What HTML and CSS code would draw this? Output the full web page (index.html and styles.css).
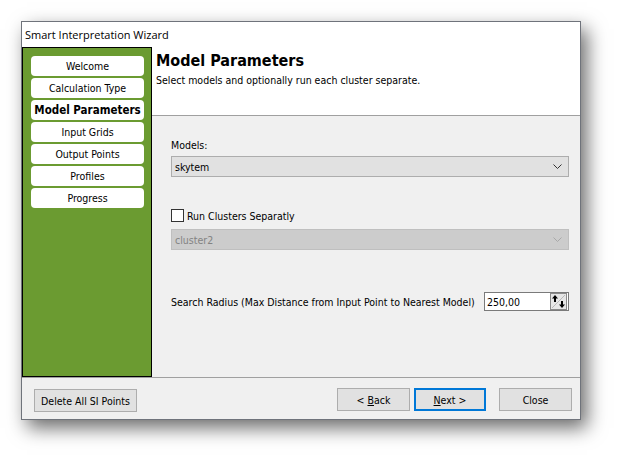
FILE: index.html
```html
<!DOCTYPE html>
<html>
<head>
<meta charset="utf-8">
<link rel="stylesheet" href="styles.css">
</head>
<body>
<div class="stage">
  <div class="window">
    <div class="titlebar">Smart Interpretation Wizard</div>
    <div class="main">
      <div class="sidebar">
        <div class="step">Welcome</div>
        <div class="step">Calculation Type</div>
        <div class="step active">Model Parameters</div>
        <div class="step">Input Grids</div>
        <div class="step">Output Points</div>
        <div class="step">Profiles</div>
        <div class="step">Progress</div>
      </div>
      <div class="pane">
        <div class="header">
          <div class="h-title">Model Parameters</div>
          <div class="h-sub">Select models and optionally run each cluster separate.</div>
        </div>
        <div class="content">
          <div class="label models-label">Models:</div>
          <div class="combo">
            <span>skytem</span>
            <svg class="chev" width="9" height="5" viewBox="0 0 9 5"><path d="M0.5 0.5 L4.5 4.5 L8.5 0.5" fill="none" stroke="#333" stroke-width="1"/></svg>
          </div>
          <div class="check-row">
            <span class="checkbox"></span>
            <span class="label">Run Clusters Separatly</span>
          </div>
          <div class="combo disabled">
            <span>cluster2</span>
            <svg class="chev" width="9" height="5" viewBox="0 0 9 5"><path d="M0.5 0.5 L4.5 4.5 L8.5 0.5" fill="none" stroke="#a8a8a8" stroke-width="1"/></svg>
          </div>
          <div class="radius-row">
            <span class="label radius-label">Search Radius (Max Distance from Input Point to Nearest Model)</span>
            <div class="numbox">
              <span>250,00</span>
              <svg class="spin" width="17" height="17" viewBox="0 0 17 17">
                <rect x="0.5" y="0.5" width="16" height="16" fill="#e6e6e6" stroke="#8a8a8a"/>
                <path d="M2 15 L15 2" stroke="#b8b8b8" stroke-width="1"/>
                <path d="M5 2 L8 5.5 L6 5.5 L6 9 L4 9 L4 5.5 L2 5.5 Z" fill="#000"/>
                <path d="M12 15 L9 11.5 L11 11.5 L11 8 L13 8 L13 11.5 L15 11.5 Z" fill="#000"/>
              </svg>
            </div>
          </div>
        </div>
      </div>
    </div>
    <div class="footer">
      <div class="btn delete">Delete All SI Points</div>
      <div class="spacer"></div>
      <div class="btn nav"><span>&lt; <u>B</u>ack</span></div>
      <div class="btn nav default"><span><u>N</u>ext &gt;</span></div>
      <div class="btn nav close">Close</div>
    </div>
  </div>
</div>
</body>
</html>
```

FILE: styles.css
```css
* { box-sizing: border-box; }
html, body { margin: 0; padding: 0; background: #ffffff; }
body {
  width: 624px;
  height: 462px;
  overflow: hidden;
  font-family: "DejaVu Sans Condensed", "DejaVu Sans", sans-serif;
  font-stretch: condensed;
  font-size: 10.5px;
  color: #000;
}
.stage { padding: 21px 0 0 21px; }
.window {
  width: 560px;
  height: 399px;
  border: 1px solid #6f737b;
  background: #f0f0f0;
  display: flex;
  flex-direction: column;
  box-shadow: 6px 8px 18px rgba(0, 0, 0, 0.58);
}
.titlebar {
  height: 25px;
  background: #fff;
  padding: 5px 0 0 3px;
  font-family: "Open Sans", "Noto Sans", sans-serif;
  font-stretch: normal;
  font-size: 11px;
  color: #000;
}
.main {
  display: flex;
  height: 330px;
}
.sidebar {
  width: 130px;
  background: #6b9b31;
  border: 1px solid #000;
  padding: 8px 7px 0 8px;
  display: flex;
  flex-direction: column;
  gap: 2px;
}
.step {
  height: 20px;
  background: #fff;
  border-radius: 4px;
  text-align: center;
  line-height: 20px;
  color: #000;
}
.step.active { font-weight: bold; font-size: 11.5px; }
.pane {
  flex: 1;
  display: flex;
  flex-direction: column;
}
.header {
  height: 69px;
  background: #fff;
  border-bottom: 1px solid #a0a0a0;
  padding: 4px 0 0 4px;
}
.h-title {
  font-weight: bold;
  font-size: 16px;
  line-height: 20px;
}
.h-sub { margin-top: 3px; }
.content {
  flex: 1;
  padding: 22px 11px 0 19px;
}
.models-label { display: block; margin-top: 1px; height: 17px; }
.combo {
  height: 21px;
  background: #e1e1e1;
  border: 1px solid #adadad;
  display: flex;
  align-items: center;
  justify-content: space-between;
  padding: 0 6px 0 3px;
}
.combo.disabled {
  background: #cccccc;
  border-color: #bfbfbf;
  color: #838383;
}
.check-row {
  display: flex;
  align-items: center;
  margin-top: 32px;
  height: 13px;
  gap: 3px;
}
.checkbox {
  width: 13px;
  height: 13px;
  background: #fff;
  border: 1px solid #333;
}
.check-row + .combo { margin-top: 7px; }
.radius-row {
  display: flex;
  align-items: center;
  justify-content: space-between;
  margin-top: 42px;
}
.radius-label { white-space: nowrap; }
.numbox {
  width: 85px;
  height: 19px;
  flex: none;
  background: #fff;
  border: 1px solid #7a7a7a;
  display: flex;
  align-items: center;
  justify-content: space-between;
  padding: 0 1px 0 2px;
}
.spin { display: block; }
.footer {
  flex: 1;
  border-top: 1px solid #a0a0a0;
  display: flex;
  align-items: flex-start;
  padding: 10px 8px 0 12px;
}
.spacer { flex: 1; }
.btn {
  height: 23px;
  background: #e1e1e1;
  border: 1px solid #adadad;
  display: flex;
  align-items: center;
  justify-content: center;
}
.btn.delete { width: 103px; margin-top: 1px; }
.btn.nav { width: 73px; }
.btn.default { width: 72px; border: 2px solid #0078d7; margin-left: 4px; }
.btn.close { margin-left: 13px; }
u { text-decoration: underline; text-underline-offset: 1px; }
```
